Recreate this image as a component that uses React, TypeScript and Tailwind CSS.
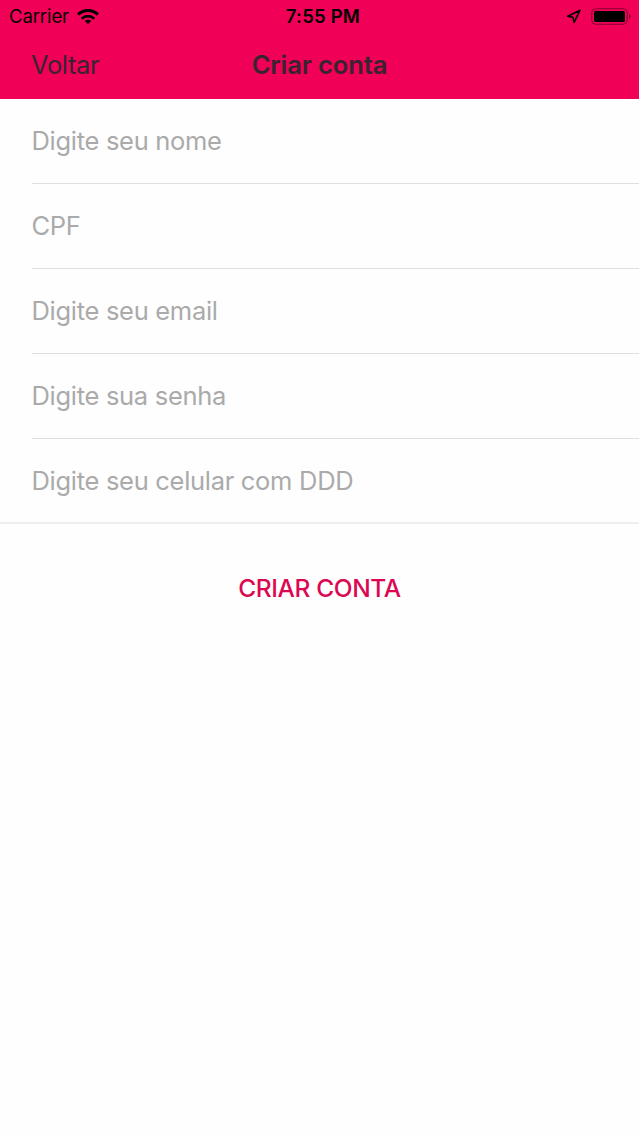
const fields = [
  { id: "name", label: "Digite seu nome" },
  { id: "cpf", label: "CPF" },
  { id: "email", label: "Digite seu email" },
  { id: "password", label: "Digite sua senha" },
  { id: "phone", label: "Digite seu celular com DDD" },
];

function WifiIcon() {
  return (
    <svg className="h-[15px] w-[22px]" viewBox="0 0 22 15" fill="none" stroke="#000">
      <path d="M1.1 5.6a14 14 0 0 1 19.8 0" strokeWidth="3" />
      <path d="M4.7 9.7a9 9 0 0 1 12.6 0" strokeWidth="2.6" />
      <path d="M11 15 7.8 12a4.6 4.6 0 0 1 6.4 0Z" fill="#000" stroke="none" />
    </svg>
  );
}

function LocationIcon() {
  return (
    <svg className="h-[15px] w-[15px]" viewBox="0 0 15 15" fill="none" stroke="#000">
      <path d="M14 1.2 1.8 7.2l5.1 1.2 1.2 5Z" strokeWidth="1.6" strokeLinejoin="round" />
    </svg>
  );
}

function BatteryIcon() {
  return (
    <svg className="h-[17px] w-[41px]" viewBox="0 0 41 17" fill="none">
      <rect x="0.75" y="0.75" width="35.5" height="15.5" rx="4" stroke="#000" strokeOpacity="0.45" />
      <rect x="3" y="3" width="31" height="11" rx="1.5" fill="#000" />
      <path d="M38 6v5c1.3-.4 1.8-1.3 1.8-2.5S39.3 6.4 38 6Z" fill="#000" fillOpacity="0.45" />
    </svg>
  );
}

function StatusBar() {
  return (
    <div className="grid h-8 grid-cols-3 items-center text-black">
      <div className="flex items-center gap-2 pl-[9px]">
        <span className="text-[18.5px] leading-8 tracking-[-0.1px]">Carrier</span>
        <WifiIcon />
      </div>
      <span className="pl-[7px] text-center text-[18.5px] font-semibold leading-8 tracking-[0.2px]">
        7:55 PM
      </span>
      <div className="flex items-center justify-end gap-2.5 pr-[7px]">
        <LocationIcon />
        <BatteryIcon />
      </div>
    </div>
  );
}

export default function App() {
  return (
    <div className="min-h-screen bg-[#fefefe] font-['Inter','Liberation_Sans',sans-serif]">
      <header className="h-[99px] bg-[#f00057]">
        <StatusBar />
        <nav className="grid h-[67px] grid-cols-3 items-center text-[#38242f]">
          <button className="pl-[31px] text-left text-[25.5px] tracking-[-0.4px]">Voltar</button>
          <h1 className="text-center text-[25.5px] font-semibold tracking-[-0.1px]">Criar conta</h1>
        </nav>
      </header>

      <form className="border-b-2 border-[#eeeeee]">
        {fields.map((field) => (
          <div key={field.id} className="group pl-8">
            <div className="-ml-[0.5px] flex h-[84px] items-center text-[25.5px] tracking-[-0.3px] text-[#aaaaaa] group-last:h-[83px] group-last:pt-px">
              {field.label}
            </div>
            <div className="h-px bg-[#dfdfdf] group-last:hidden" />
          </div>
        ))}
      </form>

      <div className="mt-[42px] flex justify-center">
        <button className="h-11 text-[24.5px] font-medium tracking-[-0.4px] text-[#dc0753]">
          CRIAR CONTA
        </button>
      </div>
    </div>
  );
}
